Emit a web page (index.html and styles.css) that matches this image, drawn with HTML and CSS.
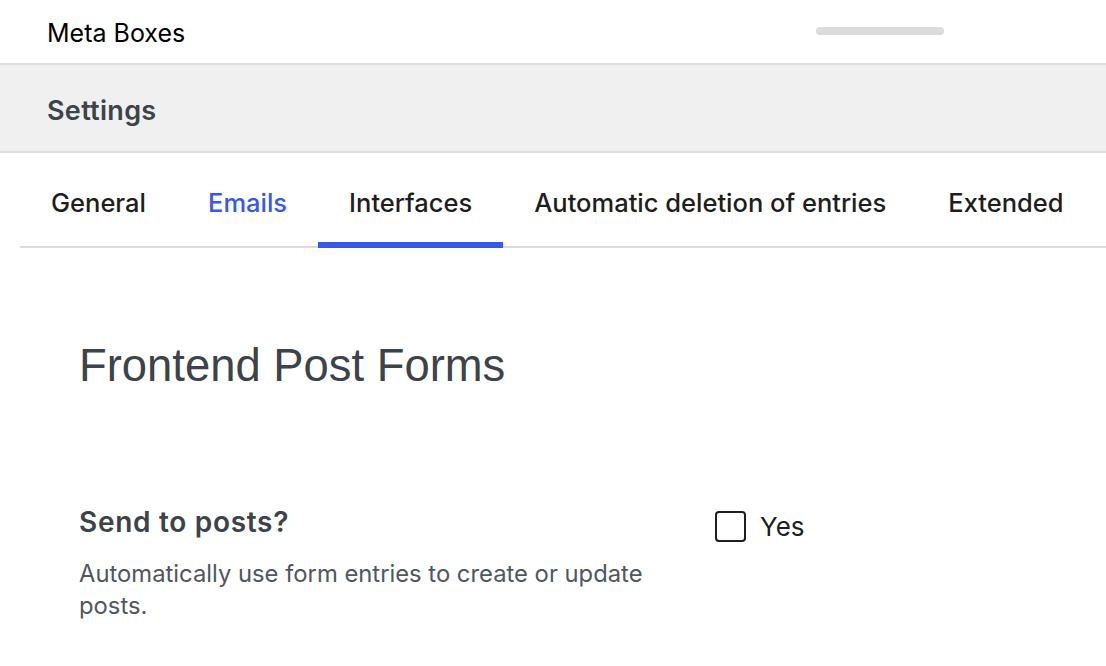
FILE: index.html
```html
<!DOCTYPE html>
<html lang="en">

<head>
    <meta charset="UTF-8">
    <meta name="viewport" content="width=device-width, initial-scale=1.0">
    <title>Settings</title>
    <link rel="stylesheet" href="styles.css">
</head>

<body>
    <div class="topbar">
        <span class="topbar-title">Meta Boxes</span>
        <span class="topbar-pill"></span>
    </div>

    <div class="panel-head">Settings</div>

    <nav class="tabs">
        <a class="tab">General</a>
        <a class="tab tab-hover">Emails</a>
        <a class="tab active">Interfaces</a>
        <a class="tab">Automatic deletion of entries</a>
        <a class="tab">Extended</a>
    </nav>

    <div class="content">
        <h2 class="section-title">Frontend Post Forms</h2>

        <div class="field">
            <div class="field-info">
                <h3 class="field-label">Send to posts?</h3>
                <p class="field-desc">Automatically use form entries to create or update posts.</p>
            </div>
            <label class="field-control">
                <span class="checkbox"></span>
                <span class="check-text">Yes</span>
            </label>
        </div>
    </div>
</body>

</html>
```
FILE: styles.css
```css
body {
    margin: 0;
    padding: 0;
    background: #fff;
    font-family: Inter, "Liberation Sans", sans-serif;
    color: #1e1e1e;
    overflow: hidden;
}

.topbar {
    height: 63px;
    display: flex;
    align-items: center;
    padding-left: 47px;
    border-bottom: 2px solid #dcdcde;
}

.topbar-title {
    font-size: 25px;
    color: #000;
    padding-top: 2px;
}

.topbar-pill {
    margin-left: auto;
    margin-right: 162px;
    width: 128px;
    height: 8px;
    border-radius: 4px;
    background: #dcdcde;
    margin-top: -2px;
}

.panel-head {
    height: 82px;
    padding-top: 4px;
    display: flex;
    align-items: center;
    padding-left: 47px;
    background: #f0f0f0;
    border-bottom: 2px solid #dcdcde;
    font-size: 27px;
    font-weight: 600;
    color: #3c434a;
    letter-spacing: 0.3px;
}

.tabs {
    display: flex;
    margin-left: 20px;
    border-bottom: 2px solid #dcdcde;
}

.tab {
    padding: 9px 31px 0;
    height: 95px;
    display: flex;
    align-items: center;
    font-size: 25.5px;
    font-weight: 500;
    color: #1e1e1e;
    box-sizing: border-box;
    margin-bottom: -2px;
    border-bottom: 6px solid transparent;
}

.tab-hover {
    color: #3858e9;
}

.tab.active {
    border-bottom-color: #3858e9;
}

.content {
    padding: 0 79px;
}

.section-title {
    margin: 90px 0 0;
    font-family: "Liberation Sans", Arial, sans-serif;
    font-size: 45.4px;
    font-weight: 400;
    color: #3c434a;
    line-height: 56px;
}

.field {
    display: flex;
    align-items: flex-start;
    margin-top: 113px;
}

.field-info {
    width: 636px;
}

.field-label {
    margin: 0;
    font-size: 28px;
    font-weight: 600;
    color: #3c434a;
    line-height: 30px;
    letter-spacing: 0.7px;
}

.field-desc {
    margin: 21px 0 0;
    font-size: 23.8px;
    line-height: 32px;
    color: #50575e;
    width: 600px;
}

.field-control {
    display: flex;
    align-items: center;
    gap: 14px;
    height: 30px;
    margin-top: 4px;
}

.checkbox {
    width: 27px;
    height: 27px;
    border: 2px solid #1e1e1e;
    border-radius: 4px;
}

.check-text {
    font-size: 26px;
    color: #1e1e1e;
}
```
